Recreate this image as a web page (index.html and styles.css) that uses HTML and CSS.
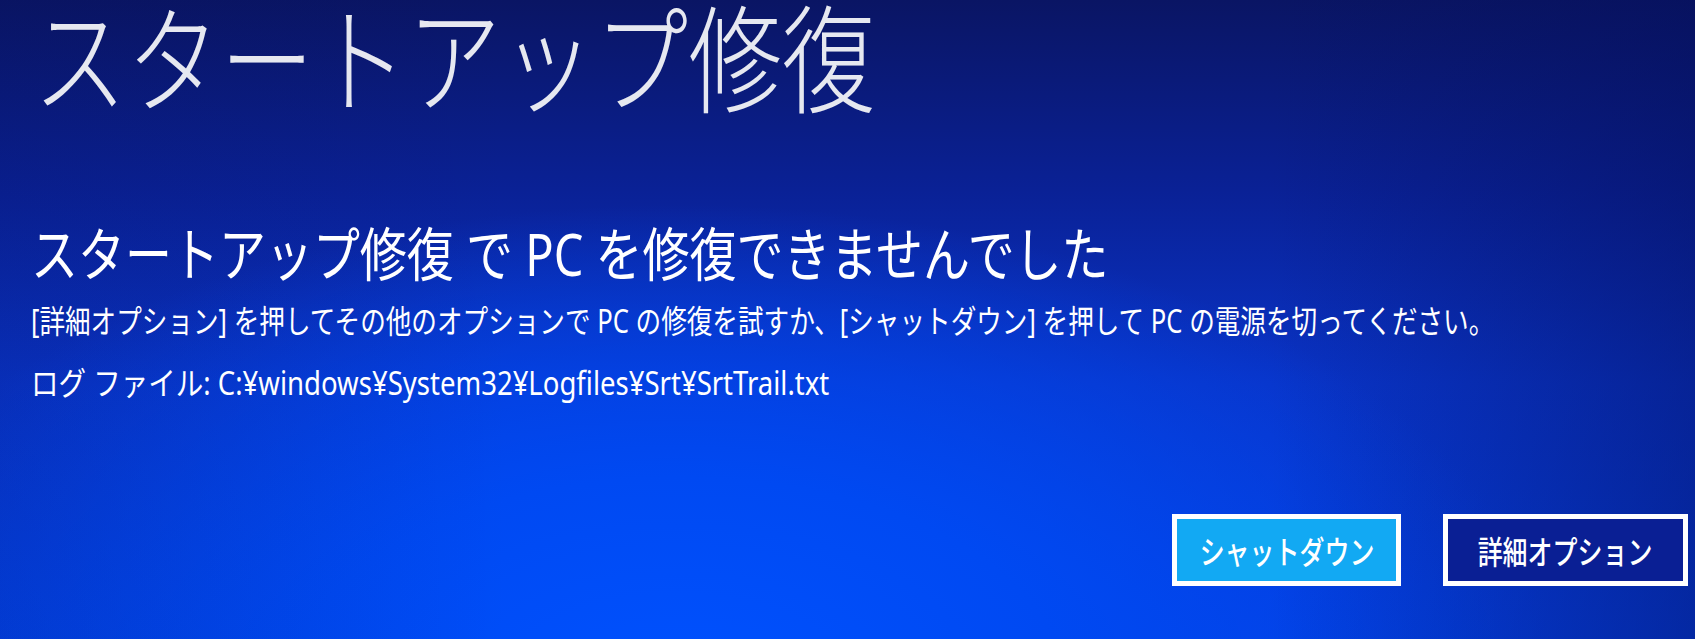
FILE: index.html
```html
<!DOCTYPE html>
<html lang="ja">
<head>
<meta charset="utf-8">
<title>スタートアップ修復</title>
<link rel="stylesheet" href="styles.css">
</head>
<body>
<main class="screen">
  <h1 class="title"><span class="sq sq-title">スタートアップ修復</span></h1>
  <h2 class="heading"><span class="sq sq-heading">スタートアップ修復 で PC を修復できませんでした</span></h2>
  <p class="message"><span class="sq sq-body">[詳細オプション] を押してその他のオプションで PC の修復を試すか、[シャットダウン] を押して PC の電源を切ってください。</span></p>
  <p class="log"><span class="sq sq-log">ログ ファイル: C:¥windows¥System32¥Logfiles¥Srt¥SrtTrail.txt</span></p>
  <div class="actions">
    <button class="btn btn-primary" type="button"><span class="btn-label">シャットダウン</span></button>
    <button class="btn btn-secondary" type="button"><span class="btn-label">詳細オプション</span></button>
  </div>
</main>
</body>
</html>
```

FILE: styles.css
```css
html, body {
  margin: 0;
  padding: 0;
  width: 1695px;
  height: 639px;
  overflow: hidden;
}

body {
  font-family: "Noto Sans", "Noto Sans CJK JP", sans-serif;
  color: #ffffff;
  background:
    linear-gradient(to right, rgba(4, 14, 90, 0.15) 0%, rgba(4, 14, 90, 0) 30%, rgba(4, 14, 90, 0) 75%, rgba(4, 14, 90, 0.45) 100%),
    radial-gradient(ellipse 65% 95% at 40% 108%, #0052ff 0%, #0049f2 35%, rgba(0, 64, 228, 0) 80%),
    linear-gradient(to bottom, #0a1564 0%, #0a2196 30%, #0934c8 60%, #043ee0 100%);
}

.screen {
  display: flex;
  flex-direction: column;
  height: 639px;
  box-sizing: border-box;
  padding: 0 7px 0 31px;
}

.title,
.heading,
.message,
.log {
  margin: 0;
  white-space: nowrap;
  line-height: 1;
}

.sq {
  display: inline-block;
  transform-origin: left center;
}

.title {
  font-size: 117px;
  font-weight: 300;
  color: #e6e8f0;
  margin-left: 2px;
}

.sq-title {
  transform: scaleX(0.8);
  margin-right: -1.8em;
}

.heading {
  margin-top: 108px;
  font-size: 58px;
  font-weight: 400;
}

.sq-heading {
  transform: scaleX(0.81);
  margin-right: -4.4em;
}

.message {
  margin-top: 22px;
  font-size: 32px;
  font-weight: 400;
}

.sq-body {
  transform: scaleX(0.8);
  margin-right: -11.5em;
}

.log {
  margin-top: 30px;
  font-size: 32px;
  font-weight: 400;
}

.sq-log {
  transform: scaleX(0.86);
  margin-right: -4em;
}

.actions {
  display: flex;
  justify-content: flex-end;
  align-items: center;
  gap: 42px;
  margin-top: 115px;
}

.btn {
  display: flex;
  align-items: center;
  justify-content: center;
  height: 72px;
  box-sizing: border-box;
  border: 5px solid #ffffff;
  padding: 0;
  font-family: "Noto Sans CJK JP", sans-serif;
  font-size: 32px;
  font-weight: 500;
  color: #ffffff;
  white-space: nowrap;
  overflow: hidden;
}

.btn-label {
  display: inline-block;
  transform: scaleX(0.78);
  transform-origin: center center;
}

.btn-primary {
  width: 229px;
  background: #12a9f3;
}

.btn-secondary {
  width: 245px;
  background: #0a1f94;
}
```
